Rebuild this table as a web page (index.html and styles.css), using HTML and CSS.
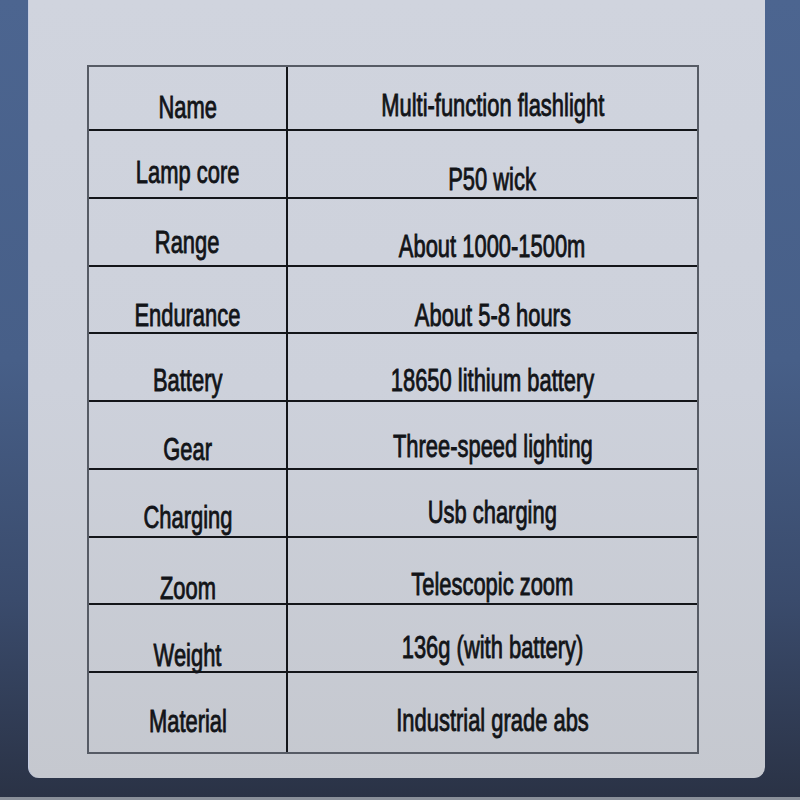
FILE: index.html
```html
<!DOCTYPE html>
<html lang="en">
<head>
<meta charset="utf-8">
<title>Multi-function flashlight specifications</title>
<link rel="stylesheet" href="styles.css">
</head>
<body>
<div class="page">
  <div class="card">
    <div class="spec">
      <div class="row r1"><div class="cell key"><span class="txt">Name</span></div><div class="cell val"><span class="txt">Multi-function flashlight</span></div></div>
      <div class="row r2"><div class="cell key"><span class="txt">Lamp core</span></div><div class="cell val"><span class="txt">P50 wick</span></div></div>
      <div class="row r3"><div class="cell key"><span class="txt">Range</span></div><div class="cell val"><span class="txt">About 1000-1500m</span></div></div>
      <div class="row r4"><div class="cell key"><span class="txt">Endurance</span></div><div class="cell val"><span class="txt">About 5-8 hours</span></div></div>
      <div class="row r5"><div class="cell key"><span class="txt">Battery</span></div><div class="cell val"><span class="txt">18650 lithium battery</span></div></div>
      <div class="row r6"><div class="cell key"><span class="txt">Gear</span></div><div class="cell val"><span class="txt">Three-speed lighting</span></div></div>
      <div class="row r7"><div class="cell key"><span class="txt">Charging</span></div><div class="cell val"><span class="txt">Usb charging</span></div></div>
      <div class="row r8"><div class="cell key"><span class="txt">Zoom</span></div><div class="cell val"><span class="txt">Telescopic zoom</span></div></div>
      <div class="row r9"><div class="cell key"><span class="txt">Weight</span></div><div class="cell val"><span class="txt">136g (with battery)</span></div></div>
      <div class="row r10"><div class="cell key"><span class="txt">Material</span></div><div class="cell val"><span class="txt">Industrial grade abs</span></div></div>
    </div>
  </div>
  <div class="floor"></div>
</div>
</body>
</html>
```

FILE: styles.css
```css
html, body {
  margin: 0;
  padding: 0;
}

body {
  width: 800px;
  height: 800px;
  overflow: hidden;
}

.page {
  height: 800px;
  display: flex;
  flex-direction: column;
  background: linear-gradient(to bottom, #4c6590 0%, #475f88 45%, #3a4b6c 75%, #2a3245 100%);
}

.card {
  box-sizing: border-box;
  width: 737px;
  height: 778px;
  margin-left: 28px;
  padding: 65px 0 0 58px;
  border-radius: 0 0 11px 11px;
  border-left: 1px solid #c4cce2;
  background: linear-gradient(to bottom, #d0d4de 0%, #cdd1db 50%, #c5c8cf 100%);
}

.spec {
  box-sizing: border-box;
  width: 612px;
  border: 2px solid #565b65;
}

.row {
  display: grid;
  grid-template-columns: 197px 1fr;
  height: 65.75px;
  --pl: 30px;
  --pr: 30px;
}

.row + .row {
  border-top: 2px solid #131519;
}

.row.r1 { height: 62px; --pl: 24px; --pr: 22px; }
.row.r2 { --pl: 25px; --pr: 32px; }
.row.r3 { --pl: 27px; --pr: 31px; }
.row.r4 { --pl: 32px; --pr: 32px; }
.row.r5 { --pl: 30px; --pr: 30px; }
.row.r6 { --pl: 31px; --pr: 28px; }
.row.r7 { --pl: 31px; --pr: 26px; }
.row.r8 { --pl: 34px; --pr: 30px; }
.row.r9 { --pl: 34px; --pr: 26px; }
.row.r10 { height: 79px; --pl: 32px; --pr: 31px; }

.cell {
  display: flex;
  justify-content: center;
  align-items: flex-start;
  overflow: visible;
}

.key {
  padding-top: var(--pl);
}

.val {
  padding-top: var(--pr);
  border-left: 2px solid #131519;
}

.txt {
  display: inline-block;
  white-space: nowrap;
  font-family: "Liberation Sans Narrow", "Liberation Sans", Arial, sans-serif;
  font-stretch: condensed;
  font-size: 32px;
  line-height: 32px;
  color: #121418;
  transform: scaleX(0.685);
  transform-origin: center top;
  -webkit-text-stroke: 0.9px #121418;
}

.floor {
  margin-top: auto;
  height: 3px;
  background: #8a909a;
}
```
